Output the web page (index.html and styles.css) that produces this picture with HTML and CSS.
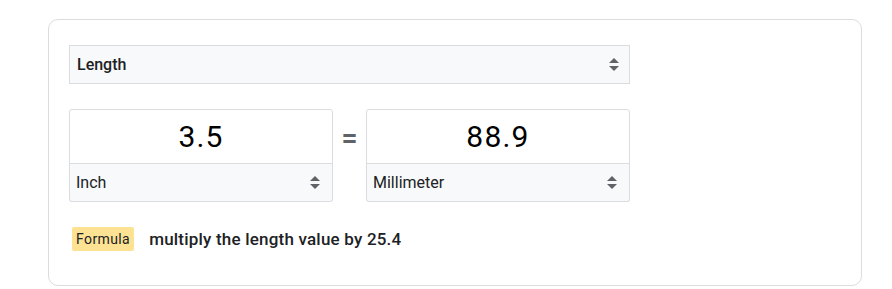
FILE: index.html
```html
<!DOCTYPE html>
<html lang="en">
<head>
    <meta charset="UTF-8">
    <title>Unit Converter</title>
    <link rel="stylesheet" href="styles.css">
</head>
<body>
    <div class="card">
        <div class="select measure">
            <span>Length</span>
            <span class="arrows"></span>
        </div>
        <div class="convert-row">
            <div class="unit-box">
                <div class="value">3.5</div>
                <div class="select unit">
                    <span>Inch</span>
                    <span class="arrows"></span>
                </div>
            </div>
            <div class="equals">=</div>
            <div class="unit-box">
                <div class="value">88.9</div>
                <div class="select unit">
                    <span>Millimeter</span>
                    <span class="arrows"></span>
                </div>
            </div>
        </div>
        <div class="formula">
            <span class="badge">Formula</span>
            <span class="formula-text">multiply the length value by 25.4</span>
        </div>
    </div>
</body>
</html>
```

FILE: styles.css
```css
body {
    font-family: Roboto, Arial, sans-serif;
    margin: 0;
    padding: 19px 30px 0 48px;
    color: #202124;
    background: #fff;
}
.card {
    width: 772px;
    height: 240px;
    border: 1px solid #dadce0;
    border-radius: 10px;
    padding: 25px 20px 0 20px;
}
.select {
    display: flex;
    align-items: center;
    justify-content: space-between;
    background-color: #f8f9fa;
    border: 1px solid #dadce0;
    font-size: 16px;
    color: #202124;
    box-sizing: border-box;
}
.measure {
    width: 561px;
    height: 39px;
    padding: 0 10px 0 7px;
    font-weight: 500;
}
.arrows {
    display: inline-block;
    width: 0;
    height: 13px;
    position: relative;
    border-left: 5px solid transparent;
    border-right: 5px solid transparent;
}
.arrows::before, .arrows::after {
    content: "";
    position: absolute;
    left: -5px;
    border-left: 5px solid transparent;
    border-right: 5px solid transparent;
}
.arrows::before {
    top: 0;
    border-bottom: 5px solid #5f6368;
}
.arrows::after {
    bottom: 0;
    border-top: 5px solid #5f6368;
}
.convert-row {
    display: flex;
    align-items: flex-start;
    margin-top: 25px;
}
.unit-box {
    width: 264px;
    border: 1px solid #dadce0;
    border-radius: 3px;
    box-sizing: border-box;
}
.value {
    height: 53px;
    display: flex;
    align-items: center;
    justify-content: center;
    font-size: 30px;
    letter-spacing: 1.2px;
    color: #000;
}
.unit {
    height: 39px;
    margin: 0 -1px -1px -1px;
    border-radius: 0 0 3px 3px;
    padding: 0 12px 0 6px;
}
.equals {
    width: 33px;
    text-align: center;
    font-size: 28px;
    font-weight: 700;
    color: #5f6368;
    line-height: 1;
    padding-top: 15px;
}
.formula {
    display: flex;
    align-items: center;
    margin-top: 25px;
    margin-left: 3px;
}
.badge {
    background-color: #fde293;
    border-radius: 2px;
    font-size: 14px;
    letter-spacing: 0.4px;
    padding: 3px 4px;
    line-height: 18px;
    color: #202124;
}
.formula-text {
    margin-left: 15px;
    font-size: 17px;
    font-weight: 500;
    letter-spacing: 0.2px;
}
```
